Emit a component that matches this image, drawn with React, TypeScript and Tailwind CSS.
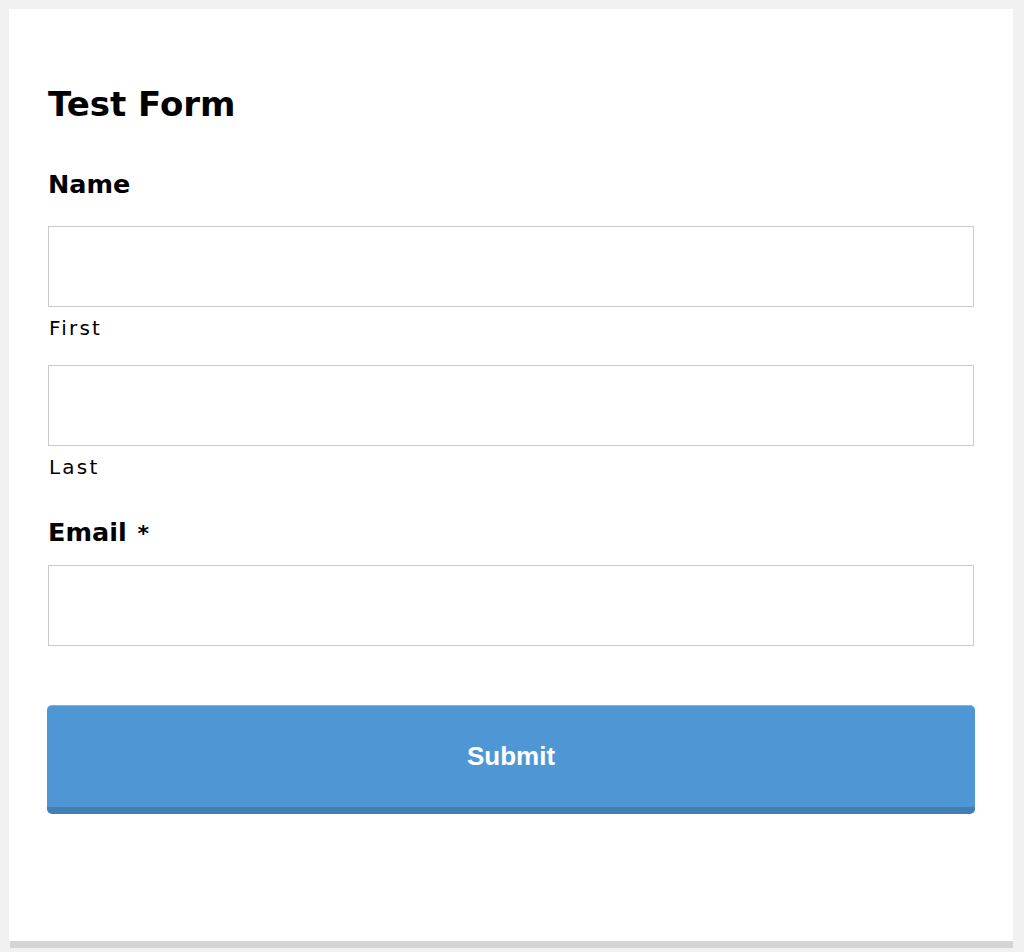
export default function App() {
  return (
    <div className="min-h-screen bg-[#f1f1f1] pt-[9px] pl-[9px] pr-[11px]" style={{ fontFamily: '"DejaVu Sans", sans-serif' }}>
      <div className="bg-white h-[932px] pt-[75px] pl-[39px] pr-[39px] flex flex-col text-black">
        <h1 className="text-[34px] leading-[40px] font-bold">Test Form</h1>

        <div className="mt-[45px] text-[25.5px] leading-[30px] font-bold">Name</div>
        <input className="mt-[27px] h-[81px] w-full border border-[#cbcbcb] bg-white outline-none" />
        <div className="mt-[9px] ml-px text-[20px] leading-[24px] tracking-[2.2px]">First</div>
        <input className="mt-[25px] h-[81px] w-full border border-[#cbcbcb] bg-white outline-none" />
        <div className="mt-[9px] ml-px text-[20px] leading-[24px] tracking-[2.2px]">Last</div>

        <div className="mt-[38px] text-[25.5px] leading-[30px] font-bold">
          Email <span className="ml-[2px] text-[22px]">*</span>
        </div>
        <input type="email" className="mt-[16px] h-[81px] w-full border border-[#cbcbcb] bg-white outline-none" />

        <button
          className="mt-[59px] -mx-px h-[109px] rounded-[5px] bg-[#4f96d4] border-t border-t-[#7fb2e0] border-b-[7px] border-b-[#427fb5] text-white text-[26px] font-bold"
          style={{ fontFamily: '"Liberation Sans", Arial, sans-serif' }}
        >
          Submit
        </button>
      </div>
      <div className="h-[7px] ml-px bg-[#d4d4d4]" />
    </div>
  );
}
